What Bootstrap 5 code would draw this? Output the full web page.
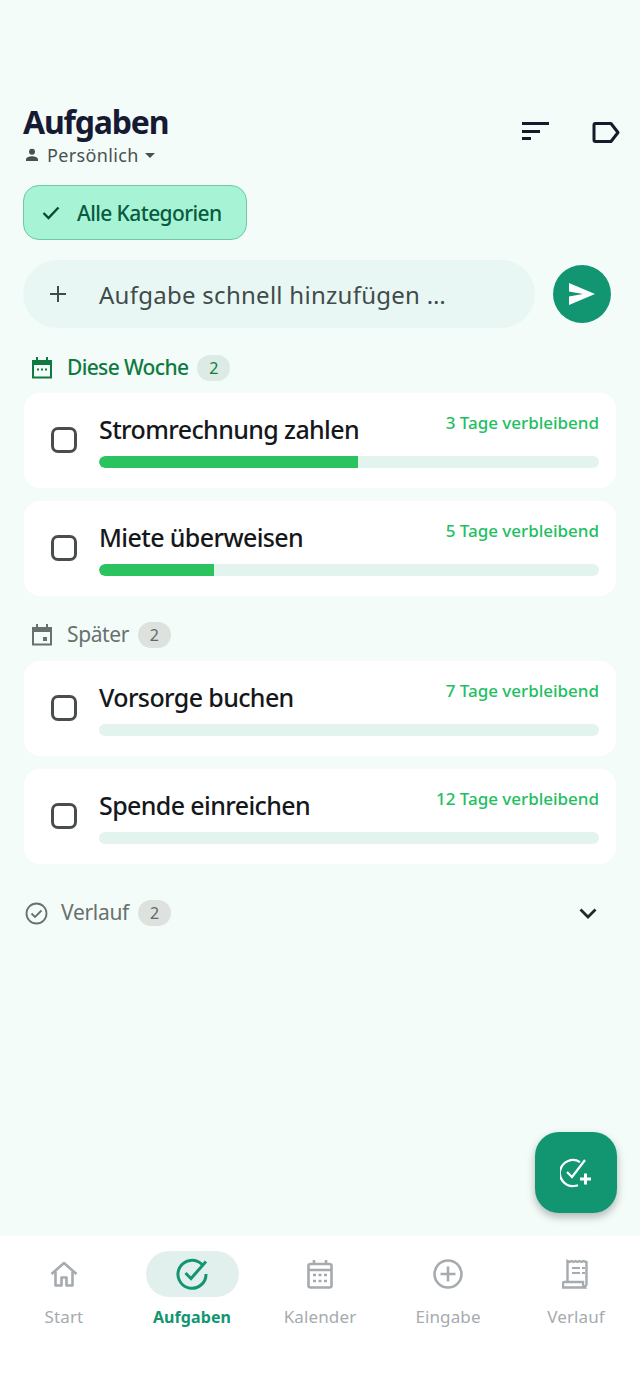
<!DOCTYPE html>
<html lang="de">
<head>
    <meta charset="UTF-8">
    <meta name="viewport" content="width=device-width, initial-scale=1.0">
    <title>Aufgaben</title>
    <link href="https://cdn.jsdelivr.net/npm/bootstrap@5.3.0/dist/css/bootstrap.min.css" rel="stylesheet">
    <style>
        body {
            background: #f3fcf9;
            font-family: "Noto Sans", sans-serif;
            color: #15171c;
        }
        .app-page { height: 1391px; overflow: hidden; position: relative; }
        .app-main { padding: 101px 23px 0 23px; }
        .page-title { font-size: 32px; font-weight: 700; line-height: 42px; color: #171a33; letter-spacing: -1.2px; margin: 0; }
        .owner-line { font-size: 18px; line-height: 24px; color: #4a5052; letter-spacing: .35px; }
        .owner-line svg { margin: 0 8px 0 2px; }
        .head-icons { gap: 42px; padding: 21px 0 0 0; margin-right: -3px; }
        .cat-chip {
            width: 224px; height: 55px; margin-top: 18px; padding-left: 18px;
            background: #a6f3d6; border: 1px solid #6fc9a6; border-radius: 16px;
            color: #0a5a3f; font-size: 21px; font-weight: 500; letter-spacing: -.6px;
        }
        .cat-chip span { margin-left: 1px; padding-top: 2px; }
        .quick-row { margin-top: 20px; }
        .quick-input {
            width: 512px; height: 68px; border-radius: 34px; background: #e9f7f4;
            color: #414b4a; font-size: 24px; padding-left: 27px; letter-spacing: .27px;
        }
        .quick-input span { margin-left: 33px; padding-top: 2px; }
        .send-btn { width: 58px; height: 58px; border-radius: 50%; background: #129672; margin-left: 18px; border: 0; padding: 0; }
        .group-head { height: 26px; font-size: 21px; font-weight: 500; letter-spacing: -.65px; }
        .group-week { color: #0f7a3f; margin: 27px 0 12px 9px; }
        .group-later { color: #69706e; margin: 26px 0 13px 9px; font-weight: 400; letter-spacing: -.4px; }
        .group-done { color: #69706e; margin: 36px 0 0 2px; font-weight: 400; letter-spacing: -.3px; }
        .group-head svg { margin-right: 15px; }
        .group-done svg { margin-right: 13px; }
        .count-pill {
            display: inline-block; width: 33px; height: 26px; line-height: 26px; margin-left: 9px;
            border-radius: 13px; text-align: center; font-size: 16px; font-weight: 400; letter-spacing: 0;
        }
        .pill-green { background: #dcebe4; color: #0f7a3f; }
        .pill-grey { background: #dde2df; color: #626866; }
        .task-card { height: 95px; margin: 0 1px 13px 1px; background: #fff; border-radius: 16px; padding: 0 17px 0 27px; }
        .task-check { width: 26px; height: 26px; border: 3px solid #4a4d4d; border-radius: 7px; margin-top: 34px; flex: none; }
        .task-body { margin-left: 22px; padding-top: 19px; }
        .task-name { font-size: 25px; line-height: 34px; font-weight: 500; letter-spacing: -.62px; color: #15181b; }
        .task-left { font-size: 17px; line-height: 24px; color: #22bf62; font-weight: 500; letter-spacing: -.02px; margin-top: -1px; }
        .task-bar { height: 12px; margin-top: 10px; background: #e3f4ef; border-radius: 6px; }
        .task-bar .progress-bar { background: #2bc35f; border-radius: 6px 0 0 6px; }
        .fab {
            position: absolute; right: 23px; top: 1132px; width: 82px; height: 81px; border-radius: 24px; border: 0; padding: 0;
            background: #129672; box-shadow: 0 4px 8px rgba(0,0,0,.28);
        }
        .bottom-nav { position: absolute; left: 0; right: 0; bottom: 0; height: 155px; background: #fff; padding-top: 15px; }
        .nav-slot { width: 128px; text-align: center; color: #a5abaf; font-size: 17px; letter-spacing: .12px; line-height: 26px; }
        .nav-ico { height: 46px; width: 93px; margin: 0 auto 7px; border-radius: 23px; }
        .nav-active .nav-ico { background: #e2f0ed; }
        .nav-active { color: #129672; font-weight: 700; font-size: 16px; letter-spacing: .1px; }
    </style>
</head>
<body>
<div class="app-page">
    <div class="app-main">
        <div class="d-flex justify-content-between align-items-start">
            <div>
                <h1 class="page-title">Aufgaben</h1>
                <div class="owner-line d-flex align-items-center">
                    <svg width="14" height="14" viewBox="0 0 14 14"><circle cx="7" cy="3.8" r="3" fill="#4a5052"/><path d="M1 13v-1.5C1 9.3 4.5 8.3 7 8.3s6 1 6 3.2V13z" fill="#4a5052"/></svg>
                    <span>Persönlich</span>
                    <svg width="10" height="5" viewBox="0 0 10 5" style="margin:0 0 0 6px"><path d="M0 0h10L5 5z" fill="#4a5052"/></svg>
                </div>
            </div>
            <div class="d-flex head-icons">
                <svg width="28" height="20" viewBox="0 0 28 20" fill="#171a2b"><rect x="0" y="0" width="27" height="3"/><rect x="0" y="8" width="18" height="3"/><rect x="0" y="15" width="9" height="3"/></svg>
                <svg width="28" height="21" viewBox="0 0 28 21" fill="none" stroke="#171a2b" stroke-width="3" stroke-linejoin="round"><path d="M2 3a1.5 1.5 0 0 1 1.500-1.500H19L26 10.500 19 19.500H3.500A1.500 1.500 0 0 1 2 18z"/></svg>
            </div>
        </div>

        <div class="cat-chip d-flex align-items-center">
            <svg width="18" height="14" viewBox="0 0 18 14" fill="none" stroke="#0a4a35" stroke-width="2.400" class="me-3"><path d="M1.500 7l5 5L16.500 1.500"/></svg>
            <span>Alle Kategorien</span>
        </div>

        <div class="quick-row d-flex align-items-center">
            <div class="quick-input d-flex align-items-center">
                <svg width="16" height="16" viewBox="0 0 16 16" stroke="#414b4a" stroke-width="2"><path d="M8 0v16M0 8h16"/></svg>
                <span>Aufgabe schnell hinzufügen …</span>
            </div>
            <button class="send-btn d-flex align-items-center justify-content-center">
                <svg width="28" height="22" viewBox="0 0 28 22" fill="#fff"><path d="M1 0l26 11L1 22v-8.500L15 11 1 8.500z"/></svg>
            </button>
        </div>

        <div class="group-head group-week d-flex align-items-center">
            <svg width="20" height="22" viewBox="0 0 20 22" fill="none" stroke="#0f7a3f"><path d="M1 6h18v14.500H1z" stroke-width="2"/><path d="M1 4h18v3H1z" fill="#0f7a3f" stroke-width="2"/><path d="M5 0v4M15 0v4" stroke-width="2"/><path d="M5 12.500h2M9 12.500h2M13 12.500h2" stroke-width="2"/></svg>
            <span>Diese Woche</span><span class="count-pill pill-green">2</span>
        </div>
        <div class="task-card d-flex">
            <div class="task-check"></div>
            <div class="task-body flex-grow-1">
                <div class="d-flex justify-content-between">
                    <div class="task-name">Stromrechnung zahlen</div>
                    <div class="task-left">3 Tage verbleibend</div>
                </div>
                <div class="progress task-bar"><div class="progress-bar" style="width:51.8%"></div></div>
            </div>
        </div>
        <div class="task-card d-flex">
            <div class="task-check"></div>
            <div class="task-body flex-grow-1">
                <div class="d-flex justify-content-between">
                    <div class="task-name">Miete überweisen</div>
                    <div class="task-left">5 Tage verbleibend</div>
                </div>
                <div class="progress task-bar"><div class="progress-bar" style="width:23%"></div></div>
            </div>
        </div>

        <div class="group-head group-later d-flex align-items-center">
            <svg width="20" height="22" viewBox="0 0 20 22" fill="none" stroke="#69706e"><path d="M1 6h18v14.500H1z" stroke-width="2"/><path d="M1 4h18v3H1z" fill="#69706e" stroke-width="2"/><path d="M5 0v4M15 0v4" stroke-width="2"/><rect x="11" y="13" width="4" height="4" fill="#69706e" stroke="none"/></svg>
            <span>Später</span><span class="count-pill pill-grey">2</span>
        </div>
        <div class="task-card d-flex">
            <div class="task-check"></div>
            <div class="task-body flex-grow-1">
                <div class="d-flex justify-content-between">
                    <div class="task-name">Vorsorge buchen</div>
                    <div class="task-left">7 Tage verbleibend</div>
                </div>
                <div class="progress task-bar"></div>
            </div>
        </div>
        <div class="task-card d-flex">
            <div class="task-check"></div>
            <div class="task-body flex-grow-1">
                <div class="d-flex justify-content-between">
                    <div class="task-name">Spende einreichen</div>
                    <div class="task-left">12 Tage verbleibend</div>
                </div>
                <div class="progress task-bar"></div>
            </div>
        </div>

        <div class="group-head group-done d-flex align-items-center">
            <svg width="23" height="23" viewBox="0 0 23 23" fill="none" stroke="#69706e" stroke-width="1.800"><circle cx="11.500" cy="11.500" r="10"/><path d="M6.500 11.500l3.500 3.500 6.500-6.500"/></svg>
            <span>Verlauf</span><span class="count-pill pill-grey">2</span>
            <svg class="ms-auto" style="margin-right:20px" width="18" height="11" viewBox="0 0 18 11" fill="none" stroke="#24282b" stroke-width="2.800"><path d="M1.500 1.500L9 9l7.500-7.500"/></svg>
        </div>
    </div>

    <button class="fab d-flex align-items-center justify-content-center">
        <svg width="32" height="30" viewBox="0 0 32 30" fill="none" stroke="#fff" stroke-width="2.200"><path d="M20 4.200A13 13 0 1 0 14 28a13 13 0 0 0 4-.8"/><path d="M7 14l5 5L25 2"/><path d="M20 21h11M25.500 15.500v11" stroke-width="3"/></svg>
    </button>

    <nav class="bottom-nav d-flex justify-content-between">
        <div class="nav-slot">
            <div class="nav-ico d-flex align-items-center justify-content-center">
                <svg width="28" height="26" viewBox="0 0 28 26" fill="none" stroke="#a5abaf" stroke-width="2.600" stroke-linejoin="round"><path d="M1.500 13L14 2l12.500 11M5.500 10.500V24.500h6v-8h5v8h6V10.500"/></svg>
            </div>
            Start
        </div>
        <div class="nav-slot nav-active">
            <div class="nav-ico d-flex align-items-center justify-content-center">
                <svg width="32" height="32" viewBox="0 0 32 32" fill="none" stroke="#129672" stroke-width="3"><path d="M26 6.500A14 14 0 1 0 30 16"/><path d="M9.500 15l5.500 5.500L30 3.500"/></svg>
            </div>
            Aufgaben
        </div>
        <div class="nav-slot">
            <div class="nav-ico d-flex align-items-center justify-content-center">
                <svg width="26" height="29" viewBox="0 0 26 29" fill="none" stroke="#a5abaf" stroke-width="2.600"><rect x="1.500" y="4" width="23" height="23.500" rx="2"/><path d="M1.500 10h23M7 0v5M19 0v5"/><path d="M6 15h3M11.500 15h3M17 15h3M6 21h3M11.500 21h3M17 21h3" stroke-width="2.400"/></svg>
            </div>
            Kalender
        </div>
        <div class="nav-slot">
            <div class="nav-ico d-flex align-items-center justify-content-center">
                <svg width="30" height="30" viewBox="0 0 30 30" fill="none" stroke="#a5abaf" stroke-width="2.600"><circle cx="15" cy="15" r="13.500"/><path d="M15 7.500v15M7.500 15h15"/></svg>
            </div>
            Eingabe
        </div>
        <div class="nav-slot">
            <div class="nav-ico d-flex align-items-center justify-content-center">
                <svg width="28" height="30" viewBox="0 0 28 30" fill="none" stroke="#a5abaf" stroke-width="2.400"><path d="M5.500 22V2l2 1 2-1 2 1 2-1 2 1 2-1 2 1 2-1 3 1V25a3 3 0 0 1-3 3"/><path d="M1 28.500h21.500c-1-1-1.500-2-1.500-3.500v-2H2.500A1.500 1.500 0 0 0 1 24.500z"/><path d="M10 9h8M20 9h3M10 14h8M20 14h3" stroke-width="2.200"/></svg>
            </div>
            Verlauf
        </div>
    </nav>
</div>
<script src="https://cdn.jsdelivr.net/npm/bootstrap@5.3.0/dist/js/bootstrap.bundle.min.js"></script>
</body>
</html>
